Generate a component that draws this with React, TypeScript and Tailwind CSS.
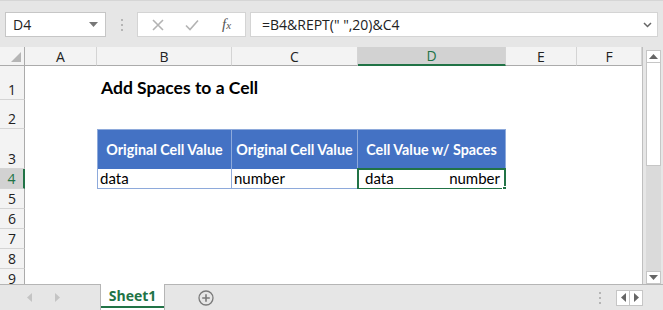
import { ReactNode } from 'react';

const colLetters = ['A', 'B', 'C', 'D', 'E', 'F'];
const rowNums = [1, 2, 3, 4, 5, 6, 7, 8, 9];

function ColHeader({ label }: { label: string }) {
  const active = label === 'D';
  return (
    <div
      className={`flex items-center justify-center border-r border-[#d4d4d4] text-[14px] ${
        active
          ? 'bg-[#d2d2d2] text-[#217346] border-b-2 border-b-[#217346]'
          : 'bg-[#f3f3f3] text-[#222] border-b border-b-[#ababab]'
      }`}
    >
      {label}
    </div>
  );
}

function RowHeader({ n }: { n: number }) {
  const active = n === 4;
  const last = n === 9;
  return (
    <div
      className={`flex justify-center overflow-hidden border-[#d4d4d4] text-[14px] leading-[18px] ${
        last ? 'items-start pt-[1px]' : 'items-end border-b'
      } ${
        active
          ? 'bg-[#d2d2d2] text-[#217346] border-r-2 border-r-[#217346]'
          : 'bg-[#f3f3f3] text-[#222] border-r border-r-[#ababab]'
      }`}
    >
      {n}
    </div>
  );
}

function Cell({ children, className = '' }: { children?: ReactNode; className?: string }) {
  return <div className={`relative bg-white ${className}`}>{children}</div>;
}

const cellFont = "font-['Lato',sans-serif]";

function renderRow(n: number) {
  const cells: ReactNode[] = [<RowHeader key={`h${n}`} n={n} />];
  colLetters.forEach((c) => {
    const key = `${c}${n}`;
    if (key === 'B1') {
      cells.push(
        <Cell key={key} className="z-10 flex items-end overflow-visible">
          <span className={`${cellFont} whitespace-nowrap pl-[4px] pb-[1px] text-[17.5px] font-bold leading-[22px] text-black`}>
            Add Spaces to a Cell
          </span>
        </Cell>
      );
    } else if (n === 3 && (c === 'B' || c === 'C' || c === 'D')) {
      const label = c === 'D' ? 'Cell Value w/ Spaces' : 'Original Cell Value';
      cells.push(
        <Cell
          key={key}
          className={`!bg-[#4472c4] flex items-center justify-center border-t border-r border-[#8eaadb] ${c === 'B' ? 'border-l' : ''}`}
        >
          <span className={`${cellFont} whitespace-nowrap pt-[1px] text-[14.3px] font-bold text-white`}>{label}</span>
        </Cell>
      );
    } else if (n === 4 && (c === 'B' || c === 'C')) {
      cells.push(
        <Cell key={key} className={`flex items-end border-b border-r border-[#8eaadb] ${c === 'B' ? 'border-l' : ''}`}>
          <span className={`${cellFont} pl-[2px] text-[15px] leading-[19px] text-black`}>
            {c === 'B' ? 'data' : 'number'}
          </span>
        </Cell>
      );
    } else if (key === 'D4') {
      cells.push(
        <Cell key={key} className="flex items-end justify-between border-b border-r border-[#8eaadb]">
          <span className={`${cellFont} pl-[7px] text-[15px] leading-[19px] text-black`}>data</span>
          <span className={`${cellFont} pr-[5px] text-[15px] leading-[19px] text-black`}>number</span>
          {/* selection frame */}
          <div className="absolute -left-[1px] -top-[1px] -right-[1px] -bottom-[2px] border-2 border-[#217346]" />
          <div className="absolute -right-[3px] -bottom-[4px] w-[6px] h-[6px] bg-[#217346] border border-white" />
        </Cell>
      );
    } else {
      cells.push(<Cell key={key} />);
    }
  });
  return cells;
}

function Tri({ dir, className }: { dir: 'up' | 'down' | 'left' | 'right'; className: string }) {
  const pts = {
    up: '0,5 4.5,0 9,5',
    down: '0,0 9,0 4.5,5',
    left: '5,0 5,9 0,4.5',
    right: '0,0 0,9 5,4.5',
  }[dir];
  const vertical = dir === 'up' || dir === 'down';
  return (
    <svg
      width={vertical ? 9 : 5}
      height={vertical ? 5 : 9}
      viewBox={vertical ? '0 0 9 5' : '0 0 5 9'}
      className={className}
    >
      <polygon points={pts} fill="currentColor" />
    </svg>
  );
}

function Dots() {
  return (
    <div className="flex flex-col gap-[3px]">
      <span className="w-[2px] h-[2px] bg-[#b5b5b5]" />
      <span className="w-[2px] h-[2px] bg-[#b5b5b5]" />
      <span className="w-[2px] h-[2px] bg-[#b5b5b5]" />
    </div>
  );
}

export default function App() {
  return (
    <div className="w-[663px] h-[310px] overflow-hidden bg-[#e6e6e6] flex flex-col font-['Open_Sans',sans-serif]">
      {/* formula bar */}
      <div className="h-[47px] shrink-0 flex items-start pt-[11px] pl-[5px] border-t border-[#d6d6d6]">
        <div className="w-[101px] h-[25px] bg-white border border-[#c6c6c6] flex items-center justify-between pl-[7px] pr-[7px]">
          <span className="text-[14px] text-[#222]">D4</span>
          <Tri dir="down" className="text-[#777]" />
        </div>
        <div className="w-[31px] h-[25px] flex items-center justify-center">
          <Dots />
        </div>
        <div className="w-[109px] h-[25px] bg-white border border-[#d4d4d4] flex items-center">
          <svg width="12" height="12" viewBox="0 0 12 12" className="ml-[14px]">
            <path d="M1 1L11 11M11 1L1 11" stroke="#b3b3b3" strokeWidth="1.6" />
          </svg>
          <svg width="14" height="12" viewBox="0 0 14 12" className="ml-[21px]">
            <path d="M1 6.5L5 10.5L13 1.5" stroke="#b3b3b3" strokeWidth="1.6" fill="none" />
          </svg>
          <span className="ml-[23px] text-[15px] italic text-[#555] font-['Liberation_Serif',serif] leading-none">
            f<span className="text-[11px]">x</span>
          </span>
        </div>
        <div className="ml-[4px] w-[408px] h-[25px] bg-white border border-[#d4d4d4] flex items-center justify-between pl-[11px] pr-[5px]">
          <span className="text-[14px] text-[#222] whitespace-pre">=B4&amp;REPT(" ",20)&amp;C4</span>
          <svg width="9" height="6" viewBox="0 0 9 6">
            <path d="M1 1L4.5 4.5L8 1" stroke="#666" strokeWidth="1.5" fill="none" />
          </svg>
        </div>
      </div>

      {/* sheet area */}
      <div className="h-[237px] shrink-0 flex">
        <div className="w-[643px] border-r border-[#bfbfbf] bg-white grid grid-cols-[25px_72px_135px_126px_148px_71px_65px] grid-rows-[19px_34px_29px_40px_20px_20px_20px_20px_20px_15px] overflow-hidden">
          <div className="relative bg-[#f3f3f3] border-r border-b border-[#ababab]">
            <svg width="10" height="10" viewBox="0 0 10 10" className="absolute right-[3px] bottom-[3px]">
              <polygon points="10,0 10,10 0,10" fill="#b5b5b5" />
            </svg>
          </div>
          {colLetters.map((c) => (
            <ColHeader key={c} label={c} />
          ))}
          {rowNums.map((n) => renderRow(n))}
        </div>
        {/* vertical scrollbar */}
        <div className="w-[20px] flex pl-[3px] pr-[2px] pt-[3px]">
          <div className="w-[15px] flex flex-col">
            <div className="h-[13px] bg-white border border-[#c6c6c6] flex items-center justify-center">
              <Tri dir="up" className="text-[#666]" />
            </div>
            <div className="h-[103px] bg-white border-x border-b border-[#c6c6c6]" />
            <div className="flex-1 bg-[#dadada]" />
            <div className="h-[13px] bg-white border border-[#c6c6c6] flex items-center justify-center">
              <Tri dir="down" className="text-[#666]" />
            </div>
          </div>
        </div>
      </div>

      {/* sheet tabs */}
      <div className="flex-1 flex items-stretch">
        <div className="w-[100px] border-t border-[#b5b5b5] flex items-center pl-[27px] gap-[23px]">
          <Tri dir="left" className="text-[#c4c4c4]" />
          <Tri dir="right" className="text-[#c4c4c4]" />
        </div>
        <div className="w-[65px] bg-white border-x border-[#b5b5b5] flex flex-col">
          <div className="flex-1 flex items-center justify-center text-[14px] font-bold text-[#217346]">Sheet1</div>
          <div className="h-[2px] mb-[2px] bg-[#217346]" />
        </div>
        <div className="flex-1 border-t border-[#b5b5b5] flex items-center">
          <svg width="16" height="16" viewBox="0 0 16 16" className="ml-[33px]">
            <circle cx="8" cy="8" r="7" stroke="#7a7a7a" strokeWidth="1.3" fill="none" />
            <path d="M8 4.2V11.8M4.2 8H11.8" stroke="#7a7a7a" strokeWidth="1.6" />
          </svg>
          <div className="ml-auto mr-[15px]">
            <Dots />
          </div>
          <div className="mr-[20px] h-[16px] w-[27px] flex border border-[#c6c6c6] bg-white">
            <div className="flex-1 flex items-center justify-center border-r border-[#c6c6c6]">
              <Tri dir="left" className="text-[#666]" />
            </div>
            <div className="flex-1 flex items-center justify-center">
              <Tri dir="right" className="text-[#666]" />
            </div>
          </div>
        </div>
      </div>
    </div>
  );
}
